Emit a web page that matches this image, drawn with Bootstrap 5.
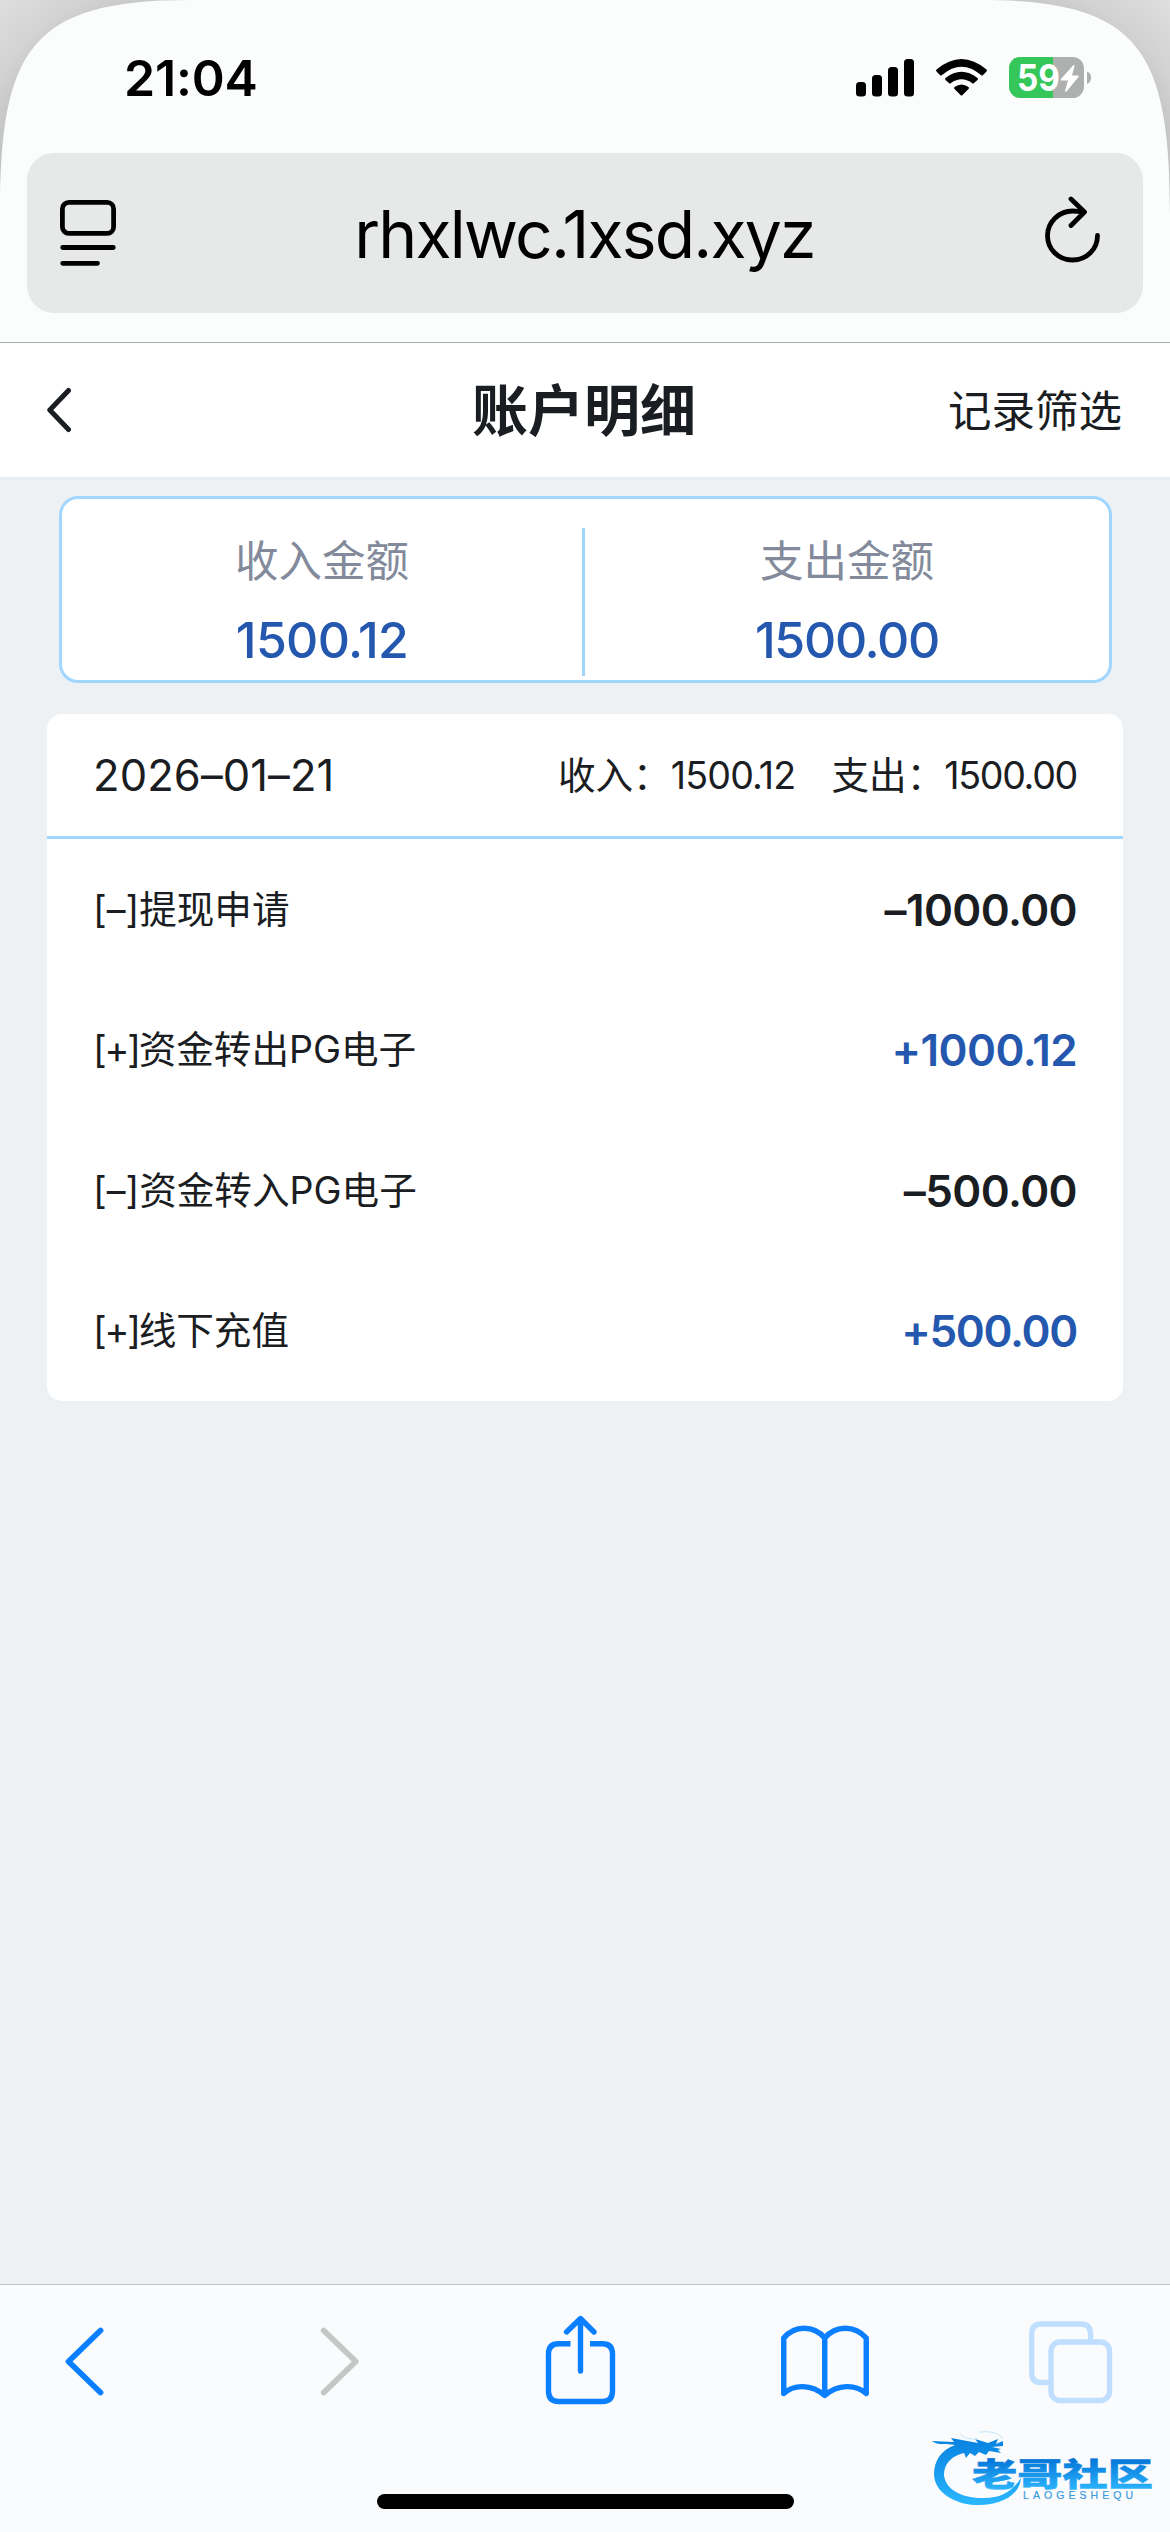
<!DOCTYPE html>
<html lang="zh-CN">
<head>
<meta charset="utf-8">
<meta name="viewport" content="width=device-width, initial-scale=1">
<title>账户明细</title>
<link href="https://cdn.jsdelivr.net/npm/bootstrap@5.3.0/dist/css/bootstrap.min.css" rel="stylesheet">
<style>
body{font-family:Inter,"Noto Sans CJK SC",sans-serif;background:#edf1f4;color:#1a1d21;line-height:1;width:1170px;height:2532px;overflow:hidden}
svg{display:block;flex:none}
.browser-top{height:343px;background:#fbfdfd;border-bottom:1px solid #a9adad}
.corner{top:0;width:200px;height:220px}
.status{height:153px;padding:0 79px 0 124px}
.clock{font-size:50px;font-weight:600;color:#000;letter-spacing:-.2px;margin-top:3px}
.url{height:160px;margin:0 27px;border-radius:27px;background:#e6e9e8;padding:0 42px 0 33px;color:#000}
.host{font-size:66px;letter-spacing:-1.8px;line-height:80px;margin-top:2px;margin-left:8px}
.page-head{height:137px;border-bottom:3px solid #e8ecf3;padding:0 48px 0 46px}
.side{flex:1 1 0}
.title{font-size:56px;font-weight:700;margin:0;line-height:1;padding-top:1px}
.filter{font-size:43.5px;padding-top:4px}
.page{height:1804px;padding:16px 47px 0}
.totals{height:187px;margin:0 11px 0 12px;border:3px solid #a1d6ff;border-radius:19px;padding-top:29px}
.total+.total{border-left:3px solid #a1d6ff}
.total{height:148px;padding-top:10px;width:520px}
.total+.total{width:527px}
.label{font-size:43.5px;color:#838a9b;line-height:44px;padding-top:1px}
.sum{font-size:50px;font-weight:500;line-height:50px;margin-top:32px;letter-spacing:-.7px}
.sum.out{letter-spacing:-1.3px}
.blue{color:#2457ae}
.ledger{margin-top:31px;border-radius:15px}
.day{height:125px;border-bottom:3px solid #a1d6ff;padding:2px 46px 0 46px}
.date{font-size:43.5px;letter-spacing:.1px}
.daysum{font-size:37.6px;gap:36px}
.num{letter-spacing:-.8px}
.num.out{letter-spacing:-1.3px}
.entry{height:140.5px;padding:1px 46px 0 46px}
.what{font-size:37.6px}
.plus{letter-spacing:-2.2px}
.amt{font-size:44px;font-weight:600;letter-spacing:-.6px}
.amt.tight{letter-spacing:-1.3px}
.toolbar{height:248px;background:#fafbfd;border-top:1px solid #c1c3c4}
.tools{height:209px;padding:28px 54px 0 39px}
.home{width:417px;height:15px;border-radius:8px;background:#000}
.brand{left:925px;top:2430px}
</style>
<script src="https://cdn.jsdelivr.net/npm/bootstrap@5.3.0/dist/js/bootstrap.bundle.min.js"></script>
</head>
<body class="position-relative d-flex flex-column">
<header class="browser-top position-relative">
  <svg class="corner position-absolute start-0" viewBox="0 0 200 220"><defs><radialGradient id="cg" gradientUnits="userSpaceOnUse" cx="175" cy="185" r="255"><stop offset=".66" stop-color="#bfc0c0"/><stop offset=".8" stop-color="#d2d2d2"/><stop offset="1" stop-color="#dfdfdf"/></radialGradient></defs><path d="M0 0H190C30 0 0 50 0 215Z" fill="url(#cg)"/></svg>
  <svg class="corner position-absolute end-0" viewBox="0 0 200 220"><path transform="translate(200 0) scale(-1 1)" d="M0 0H190C30 0 0 50 0 215Z" fill="url(#cg)"/></svg>
  <div class="status position-relative d-flex align-items-center justify-content-between">
    <div class="clock">21:04</div>
    <svg width="236" height="62" viewBox="855 47 236 62" style="margin-top:3px">
      <rect x="856" y="82" width="10" height="14.5" rx="3.5"/><rect x="872" y="75" width="10" height="21.5" rx="3.5"/><rect x="888" y="67" width="10" height="29.5" rx="3.5"/><rect x="904" y="59" width="10" height="37.500" rx="3.500"/>
      <path d="M936.500 69.500Q961.500 48.500 986.500 69.500Q987.500 70.500 986.500 71.500L983 75Q982 76 981 75Q961.500 58.500 942 75Q941 76 940 75L936.500 71.500Q935.500 70.500 936.500 69.500Z"/>
      <path d="M945.500 78Q961.500 65.500 977.500 78Q978.500 79 977.500 80L974 83Q973 84 972 83Q961.500 75.500 951 83Q950 84 949 83L945.500 80Q944.500 79 945.500 78Z"/>
      <path d="M954.500 87Q961.500 82 968.500 87Q969.500 88 968.500 89L962.500 95Q961.500 96 960.500 95L954.500 89Q953.500 88 954.500 87Z"/>
      <clipPath id="bat"><rect x="1009" y="57" width="75" height="41" rx="11.500"/></clipPath>
      <g clip-path="url(#bat)"><rect x="1009" y="57" width="75" height="41" fill="#adb0af"/><rect x="1009" y="57" width="44" height="41" fill="#35c759"/></g>
      <path d="M1087 71.500Q1091 73 1091 77.700Q1091 82.500 1087 84Z" fill="#adb0af"/>
      <text x="1017" y="91" font-size="37" font-weight="700" fill="#fff" textLength="43" lengthAdjust="spacingAndGlyphs">59</text>
      <path d="M1073.500 65L1060.500 79.500Q1060.500 80.500 1061.500 80.500H1068L1065 91Q1065.500 92.500 1066.500 91.500L1078.500 77Q1079 76 1078 75.500H1072L1074.500 66Q1074.500 64.500 1073.500 65Z" fill="#fff"/>
    </svg>
  </div>
  <div class="url position-relative d-flex align-items-center justify-content-between">
    <svg width="56" height="66" viewBox="0 0 56 66" fill="none" stroke="#000" stroke-width="4.800" stroke-linecap="round"><rect x="2.400" y="2.400" width="51.200" height="31" rx="6.500"/><path d="M2.700 47.500H53.300M2.700 63.300H37.500"/></svg>
    <div class="host">rhxlwc.1xsd.xyz</div>
    <svg width="56" height="74" viewBox="1046 196 56 74" fill="none" stroke="#000" stroke-width="4.800" stroke-linecap="round" stroke-linejoin="round"><path d="M1098.500 235.500C1098.500 249 1088 260 1073.500 260S1048.500 249 1048.500 235.500S1060 211 1073.500 211Q1079 211 1084 212.500M1072 199L1085.500 212L1072 225.500"/></svg>
  </div>
</header>

<nav class="page-head bg-white d-flex align-items-center">
  <div class="side"><svg width="26" height="46" viewBox="0 0 26 46" fill="none" stroke="#1a1d21" stroke-width="5" stroke-linecap="round" stroke-linejoin="round"><path d="M22.500 3.500L3.800 23L22.500 42.500"/></svg></div>
  <h1 class="title">账户明细</h1>
  <div class="side filter text-end">记录筛选</div>
</nav>

<main class="page">
  <section class="totals bg-white d-flex text-center">
    <div class="total"><div class="label">收入金额</div><div class="sum blue">1500.12</div></div>
    <div class="total"><div class="label">支出金额</div><div class="sum out blue">1500.00</div></div>
  </section>
  <section class="ledger bg-white">
    <div class="day d-flex align-items-center justify-content-between">
      <div class="date">2026–01–21</div>
      <div class="daysum d-flex"><span>收入：<span class="num">1500.12</span></span><span>支出：<span class="num out">1500.00</span></span></div>
    </div>
    <div class="entry d-flex align-items-center justify-content-between"><span class="what">[–]提现申请</span><span class="amt">–1000.00</span></div>
    <div class="entry d-flex align-items-center justify-content-between"><span class="what"><span class="plus">[+]</span>资金转出PG电子</span><span class="amt blue">+1000.12</span></div>
    <div class="entry d-flex align-items-center justify-content-between"><span class="what">[–]资金转入PG电子</span><span class="amt">–500.00</span></div>
    <div class="entry d-flex align-items-center justify-content-between"><span class="what"><span class="plus">[+]</span>线下充值</span><span class="amt tight blue">+500.00</span></div>
  </section>
</main>

<footer class="toolbar">
  <div class="tools d-flex align-items-start justify-content-between">
    <svg width="90" height="100" viewBox="39 2313 90 100" fill="none" stroke="#0a7fff" stroke-width="5.800" stroke-linecap="round" stroke-linejoin="round"><path d="M100.500 2330.500L68.500 2361.500L100.500 2392.500"/></svg>
    <svg width="90" height="100" viewBox="285.750 2313 90 100" fill="none" stroke="#c5c7c6" stroke-width="5.800" stroke-linecap="round" stroke-linejoin="round"><path d="M323.500 2330.500L355.500 2361.500L323.500 2392.500"/></svg>
    <svg width="90" height="100" viewBox="532.500 2313 90 100" fill="none" stroke="#0a7fff" stroke-width="5.400"><path d="M570 2353H570M570 2343.700H558Q548 2343.700 548 2354V2391Q548 2401.500 558 2401.500H602Q612 2401.500 612 2391V2354Q612 2343.700 602 2343.700H589.500"/><path stroke-linecap="round" stroke-linejoin="round" d="M580 2371V2319M566 2332L580 2318.500L593.500 2332"/></svg>
    <svg width="90" height="100" viewBox="779.250 2313 90 100" fill="none" stroke="#0a7fff" stroke-width="5.400" stroke-linejoin="round" stroke-linecap="round"><path d="M825 2338C814 2325 795 2325 784 2338V2393.500C794 2384 812 2384 825 2395.500C838 2384 856 2384 866.500 2393.500V2338C855 2325 836 2325 825 2338V2395"/></svg>
    <svg width="90" height="100" viewBox="1026 2313 90 100" fill="none" stroke="#c0deff" stroke-width="5.400"><path d="M1090.500 2340V2334Q1090.500 2324 1081 2324H1041Q1031.700 2324 1031.700 2334V2373Q1031.700 2382.500 1041 2382.500H1049"/><rect x="1051" y="2342" width="58.500" height="58.500" rx="9"/></svg>
  </div>
  <div class="home mx-auto"></div>
</footer>

<svg class="brand position-absolute" width="235" height="80" viewBox="925 2430 235 80">
  <defs><linearGradient id="bl" gradientUnits="userSpaceOnUse" x1="0" y1="2438" x2="0" y2="2505"><stop offset="0" stop-color="#0781e0"/><stop offset="1" stop-color="#2bb7ff"/></linearGradient><linearGradient id="bt" gradientUnits="userSpaceOnUse" x1="0" y1="2459" x2="0" y2="2489"><stop offset="0" stop-color="#0576d8"/><stop offset="1" stop-color="#2bb3fb"/></linearGradient></defs>
  <path fill="url(#bl)" d="M955 2445C941 2450 934 2461 934 2474C934 2492 955 2506 981 2505C1003 2504 1020 2494 1021 2478C1012 2492 1000 2498 985 2498C962 2499 945 2489 944 2475C944 2463 952 2456 964 2453L966 2458L970 2453L975 2456L979 2452L986 2455L989 2451L1001 2453L998 2450L1001 2449L992 2447L1003 2446L1003 2441L996 2444L998 2439L988 2443L975 2439L978 2443L951 2438L954 2442L932 2441C938 2446 947 2443 955 2445Z"/>
  <path fill="none" stroke="#a9dcf2" stroke-width=".7" d="M960 2434Q966 2440 978 2439M979 2432Q998 2430 1003 2439"/>
  <text x="972" y="2486" font-family="'Noto Sans CJK SC',sans-serif" font-size="32" font-weight="900" fill="url(#bt)" stroke="url(#bt)" stroke-width=".5" textLength="181" lengthAdjust="spacingAndGlyphs">老哥社区</text>
  <text x="1023" y="2498.500" font-family="'Liberation Sans',sans-serif" font-size="10.500" fill="#3b9be0" stroke="#3b9be0" stroke-width=".2" textLength="110">LAOGESHEQU</text>
</svg>
</body>
</html>
